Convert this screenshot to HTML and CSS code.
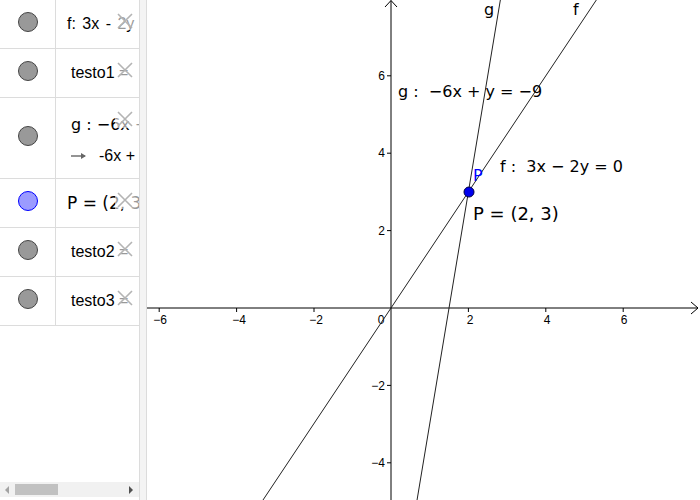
FILE: index.html
```html
<!DOCTYPE html>
<html>
<head>
<meta charset="utf-8">
<link rel="stylesheet" href="styles.css">
</head>
<body>
<div class="app">
  <div class="algebra">
    <div class="rows">
      <div class="row">
        <div class="marble-cell"><span class="marble"></span></div>
        <div class="content"><span class="txt spaced">f: 3x - 2y = 0</span></div>
        <span class="del"><svg width="16" height="16" viewBox="0 0 16 16"><path d="M1 1L15 15M15 1L1 15" stroke="#b4b4b4" stroke-width="1.6" fill="none"/></svg></span>
      </div>
      <div class="row">
        <div class="marble-cell"><span class="marble"></span></div>
        <div class="content"><span class="txt indent">testo1 =</span></div>
        <span class="del"><svg width="16" height="16" viewBox="0 0 16 16"><path d="M1 1L15 15M15 1L1 15" stroke="#b4b4b4" stroke-width="1.6" fill="none"/></svg></span>
      </div>
      <div class="row tall">
        <div class="marble-cell"><span class="marble"></span></div>
        <div class="content stack">
          <span class="math indent">g : −6x + y = −9</span>
          <span class="txt indent line2"><svg class="arrow" width="16" height="8" viewBox="0 0 16 8"><path d="M0 4H14" stroke="#666" stroke-width="1.4"/><path d="M10 1L15 4L10 7Z" fill="#666"/></svg>-6x + y = -9</span>
        </div>
        <span class="del"><svg width="16" height="16" viewBox="0 0 16 16"><path d="M1 1L15 15M15 1L1 15" stroke="#b4b4b4" stroke-width="1.6" fill="none"/></svg></span>
      </div>
      <div class="row">
        <div class="marble-cell"><span class="marble blue"></span></div>
        <div class="content"><span class="math big">P = (2, 3)</span></div>
        <span class="del"><svg width="16" height="16" viewBox="0 0 16 16"><path d="M1 1L15 15M15 1L1 15" stroke="#b4b4b4" stroke-width="1.6" fill="none"/></svg></span>
      </div>
      <div class="row">
        <div class="marble-cell"><span class="marble"></span></div>
        <div class="content"><span class="txt indent">testo2 =</span></div>
        <span class="del"><svg width="16" height="16" viewBox="0 0 16 16"><path d="M1 1L15 15M15 1L1 15" stroke="#b4b4b4" stroke-width="1.6" fill="none"/></svg></span>
      </div>
      <div class="row">
        <div class="marble-cell"><span class="marble"></span></div>
        <div class="content"><span class="txt indent">testo3 =</span></div>
        <span class="del"><svg width="16" height="16" viewBox="0 0 16 16"><path d="M1 1L15 15M15 1L1 15" stroke="#b4b4b4" stroke-width="1.6" fill="none"/></svg></span>
      </div>
    </div>
    <div class="hscroll">
      <span class="arr-left"></span>
      <span class="track"><span class="thumb"></span></span>
      <span class="arr-right"></span>
    </div>
  </div>
  <div class="splitter"></div>
  <div class="graph">
    <svg class="plot" width="553" height="500" viewBox="147 0 553 500">
      <g stroke="#000" stroke-width="1" fill="none">
        <line x1="147" y1="308" x2="698" y2="308"/>
        <path d="M691 302L698 308L691 314"/>
        <line x1="391" y1="500" x2="391" y2="0.5"/>
        <path d="M385 7L391 0.5L397 7"/>
        <line x1="159.2" y1="308" x2="159.2" y2="312"/>
        <line x1="236.6" y1="308" x2="236.6" y2="312"/>
        <line x1="314" y1="308" x2="314" y2="312"/>
        <line x1="468.4" y1="308" x2="468.4" y2="312"/>
        <line x1="545.8" y1="308" x2="545.8" y2="312"/>
        <line x1="623.2" y1="308" x2="623.2" y2="312"/>
        <line x1="387" y1="75.8" x2="391" y2="75.8"/>
        <line x1="387" y1="153.2" x2="391" y2="153.2"/>
        <line x1="387" y1="230.6" x2="391" y2="230.6"/>
        <line x1="387" y1="385.4" x2="391" y2="385.4"/>
        <line x1="387" y1="462.8" x2="391" y2="462.8"/>
      </g>
      <g class="ticks">
        <text x="160" y="324" text-anchor="middle">−6</text>
        <text x="239" y="324" text-anchor="middle">−4</text>
        <text x="316" y="324" text-anchor="middle">−2</text>
        <text x="381" y="324" text-anchor="middle">0</text>
        <text x="470" y="324" text-anchor="middle">2</text>
        <text x="547" y="324" text-anchor="middle">4</text>
        <text x="624" y="324" text-anchor="middle">6</text>
        <text x="385" y="80" text-anchor="end">6</text>
        <text x="385" y="157" text-anchor="end">4</text>
        <text x="385" y="235" text-anchor="end">2</text>
        <text x="385" y="390" text-anchor="end">−2</text>
        <text x="385" y="467" text-anchor="end">−4</text>
      </g>
      <g stroke="#222" stroke-width="1">
        <line x1="236.2" y1="540.2" x2="623.2" y2="-40.3"/>
        <line x1="391" y1="656.3" x2="514.8" y2="-86.7"/>
      </g>
      <g class="labels">
        <text x="484" y="15">g</text>
        <text x="573" y="15">f</text>
        <text x="398" y="97" xml:space="preserve">g :  −6x + y = −9</text>
        <text x="500" y="172" xml:space="preserve">f :  3x − 2y = 0</text>
        <text class="pbig" x="473" y="220" xml:space="preserve">P = (2, 3)</text>
        <text class="plabel" x="473" y="181">P</text>
      </g>
      <circle cx="469" cy="192" r="5" fill="#0000ee" stroke="#000044" stroke-width="1"/>
    </svg>
  </div>
</div>
</body>
</html>
```
FILE: styles.css
```css
html, body {
  margin: 0;
  padding: 0;
  background: #fff;
}
.app {
  display: flex;
  width: 700px;
  height: 500px;
  overflow: hidden;
}
.algebra {
  width: 139px;
  height: 500px;
  border-right: 1px solid #dcdcdc;
  display: flex;
  flex-direction: column;
  justify-content: space-between;
  flex: none;
}
.row {
  position: relative;
  display: flex;
  height: 48px;
  border-bottom: 1px solid #dcdcdc;
}
.row.tall {
  height: 80px;
}
.marble-cell {
  width: 56px;
  flex: none;
  border-right: 1px solid #dcdcdc;
  display: flex;
  align-items: center;
  justify-content: center;
  padding-bottom: 4px;
  box-sizing: border-box;
}
.marble {
  width: 18px;
  height: 18px;
  border-radius: 50%;
  background: #999;
  border: 1px solid #444;
}
.marble.blue {
  background: #9b9bff;
  border-color: #0000ff;
}
.content {
  flex: 1;
  overflow: hidden;
  white-space: nowrap;
  display: flex;
  align-items: center;
  padding-left: 11px;
}
.content.stack {
  flex-direction: column;
  align-items: flex-start;
  justify-content: center;
  gap: 13px;
  padding-top: 4px;
  box-sizing: border-box;
}
.txt {
  font-family: "Liberation Sans", Arial, sans-serif;
  font-size: 16px;
  color: #000;
}
.txt.spaced {
  word-spacing: 2px;
}
.math {
  font-family: "DejaVu Sans", sans-serif;
  font-size: 16px;
  color: #000;
  white-space: pre;
}
.math.big {
  font-size: 17px;
}
.indent {
  margin-left: 4px;
}
.line2 {
  display: flex;
  align-items: center;
}
.arrow {
  display: block;
  margin-right: 12px;
}
.del {
  position: absolute;
  left: 115px;
  top: 12px;
  width: 24px;
  height: 18px;
  background: rgba(255, 255, 255, 0.6);
  display: flex;
  align-items: center;
  padding-left: 2px;
  box-sizing: border-box;
}
.del svg {
  display: block;
}
.hscroll {
  height: 15px;
  margin-bottom: 3px;
  background: #f1f1f1;
  display: flex;
  align-items: center;
}
.arr-left {
  width: 0;
  height: 0;
  border-top: 4px solid transparent;
  border-bottom: 4px solid transparent;
  border-right: 4px solid #a3a3a3;
  margin-left: 5px;
}
.track {
  flex: 1;
  height: 11px;
  margin-left: 6px;
}
.thumb {
  display: block;
  width: 43px;
  height: 11px;
  background: #c1c1c1;
}
.arr-right {
  width: 0;
  height: 0;
  border-top: 4px solid transparent;
  border-bottom: 4px solid transparent;
  border-left: 4px solid #505050;
  margin-right: 6px;
}
.splitter {
  width: 6px;
  flex: none;
  background: #f4f4f4;
  border-right: 1px solid #dcdcdc;
}
.graph {
  flex: 1;
  background: #fff;
}
.plot {
  display: block;
}
.ticks text {
  font-family: "Liberation Sans", Arial, sans-serif;
  font-size: 12px;
  fill: #000;
}
.labels text {
  font-family: "DejaVu Sans", sans-serif;
  font-size: 16px;
  fill: #000;
}
.labels .pbig {
  font-size: 18px;
}
.labels .plabel {
  fill: #0000ff;
  font-size: 16px;
}
```
